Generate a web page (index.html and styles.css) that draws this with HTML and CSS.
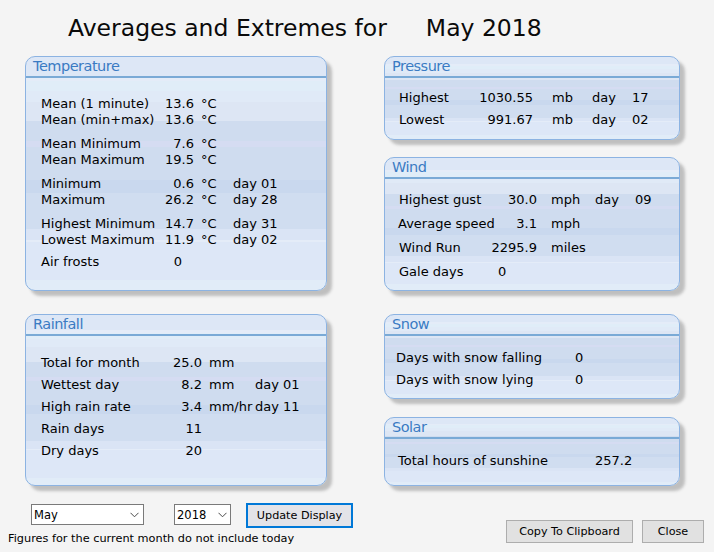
FILE: index.html
```html
<!DOCTYPE html>
<html lang="en">
<head>
<meta charset="utf-8">
<title>Averages and Extremes</title>
<link rel="stylesheet" href="styles.css">
</head>
<body>
<div class="page">
  <h1 class="title"><span class="title-main">Averages and Extremes for</span><span class="title-month">May 2018</span></h1>

  <div class="columns">
    <div class="col">
      <section class="panel panel-temp">
        <div class="panel-head">Temperature</div>
        <div class="panel-body">
          <div class="row"><span>Mean (1 minute)</span><span class="v">13.6</span><span class="u">°C</span></div>
          <div class="row"><span>Mean (min+max)</span><span class="v">13.6</span><span class="u">°C</span></div>
          <div class="row grp"><span>Mean Minimum</span><span class="v">7.6</span><span class="u">°C</span></div>
          <div class="row"><span>Mean Maximum</span><span class="v">19.5</span><span class="u">°C</span></div>
          <div class="row grp"><span>Minimum</span><span class="v">0.6</span><span class="u">°C</span><span>day 01</span></div>
          <div class="row"><span>Maximum</span><span class="v">26.2</span><span class="u">°C</span><span>day 28</span></div>
          <div class="row grp"><span>Highest Minimum</span><span class="v">14.7</span><span class="u">°C</span><span>day 31</span></div>
          <div class="row"><span>Lowest Maximum</span><span class="v">11.9</span><span class="u">°C</span><span>day 02</span></div>
          <div class="row grp-sm"><span>Air frosts</span><span class="v v-inset">0</span></div>
        </div>
      </section>

      <section class="panel panel-rain">
        <div class="panel-head">Rainfall</div>
        <div class="panel-body">
          <div class="row"><span>Total for month</span><span class="v">25.0</span><span class="u">mm</span></div>
          <div class="row"><span>Wettest day</span><span class="v">8.2</span><span class="u">mm</span><span>day 01</span></div>
          <div class="row"><span>High rain rate</span><span class="v">3.4</span><span class="u">mm/hr</span><span>day 11</span></div>
          <div class="row"><span>Rain days</span><span class="v">11</span></div>
          <div class="row"><span>Dry days</span><span class="v">20</span></div>
        </div>
      </section>
    </div>

    <div class="col">
      <section class="panel panel-pressure">
        <div class="panel-head">Pressure</div>
        <div class="panel-body">
          <div class="row"><span>Highest</span><span class="v">1030.55</span><span class="u">mb</span><span>day</span><span>17</span></div>
          <div class="row"><span>Lowest</span><span class="v">991.67</span><span class="u">mb</span><span>day</span><span>02</span></div>
        </div>
      </section>

      <section class="panel panel-wind">
        <div class="panel-head">Wind</div>
        <div class="panel-body">
          <div class="row"><span>Highest gust</span><span class="v">30.0</span><span class="u">mph</span><span>day</span><span>09</span></div>
          <div class="row"><span class="nudge">Average speed</span><span class="v">3.1</span><span class="u">mph</span></div>
          <div class="row"><span>Wind Run</span><span class="v">2295.9</span><span class="u">miles</span></div>
          <div class="row"><span>Gale days</span><span class="v v-left">0</span></div>
        </div>
      </section>

      <section class="panel panel-snow">
        <div class="panel-head">Snow</div>
        <div class="panel-body">
          <div class="row"><span>Days with snow falling</span><span>0</span></div>
          <div class="row"><span>Days with snow lying</span><span>0</span></div>
        </div>
      </section>

      <section class="panel panel-solar">
        <div class="panel-head">Solar</div>
        <div class="panel-body">
          <div class="row"><span>Total hours of sunshine</span><span>257.2</span></div>
        </div>
      </section>
    </div>
  </div>

  <div class="footer">
    <div class="footer-left">
      <div class="controls">
        <div class="select select-month"><span>May</span><svg width="9" height="6" viewBox="0 0 9 6"><polyline points="0.5,0.8 4.5,4.8 8.5,0.8" fill="none" stroke="#4a4a4a" stroke-width="1"/></svg></div>
        <div class="select select-year"><span>2018</span><svg width="9" height="6" viewBox="0 0 9 6"><polyline points="0.5,0.8 4.5,4.8 8.5,0.8" fill="none" stroke="#4a4a4a" stroke-width="1"/></svg></div>
        <button class="btn btn-focus">Update Display</button>
      </div>
      <p class="note">Figures for the current month do not include today</p>
    </div>
    <div class="footer-right">
      <button class="btn btn-copy">Copy To Clipboard</button>
      <button class="btn btn-close">Close</button>
    </div>
  </div>
</div>
</body>
</html>
```

FILE: styles.css
```css
html, body {
  margin: 0;
  padding: 0;
  background: #f4f4f4;
}

body {
  font-family: "DejaVu Sans", Verdana, sans-serif;
  color: #000;
  width: 714px;
  height: 552px;
  overflow: hidden;
}

.title {
  display: flex;
  margin: 0;
  padding-top: 14px;
  height: 28px;
  font-size: 23.5px;
  line-height: 28px;
  font-weight: normal;
  color: #0a0a0a;
}

.title-main { margin-left: 68px; }
.title-month { margin-left: 39px; }

.columns {
  display: grid;
  grid-template-columns: 302px 296px;
  column-gap: 57px;
  padding-left: 25px;
  margin-top: 14px;
}

.col {
  display: flex;
  flex-direction: column;
}

.panel {
  box-sizing: border-box;
  border: 1px solid #8cb3e2;
  border-radius: 10px;
  box-shadow: 5px 5px 3px rgba(80, 80, 80, 0.32);
  background: linear-gradient(to bottom,
    #dde7f6 0%, #dde7f6 8.9%,
    #e4ecf8 8.9%, #e4ecf8 10.5%,
    #e0edf8 10.5%, #e0edf8 14.4%,
    #e0eaf7 14.4%, #e0eaf7 19.1%,
    #dde6f4 19.1%, #dde6f4 27.6%,
    #cfdcef 27.6%, #cfdcef 36.2%,
    #d5dcf2 36.2%, #d5dcf2 38.7%,
    #cfdcef 38.7%, #cfdcef 53%,
    #c9d8ee 53%, #c9d8ee 58.3%,
    #d0ddf0 58.3%, #d0ddf0 74%,
    #dae4f5 74%, #dae4f5 78.6%,
    #e4ecf8 78.6%, #e4ecf8 79.6%,
    #dde7f7 79.6%, #dde7f7 95.6%,
    #e1ecf8 95.6%, #e1ecf8 100%);
  overflow: hidden;
}

.panel-head {
  height: 19px;
  line-height: 19px;
  padding-left: 7px;
  border-bottom: 2px solid #7aaad6;
  font-size: 14.5px;
  letter-spacing: -0.5px;
  color: #3a7bc3;
}

.panel-body {
  font-size: 13px;
}

.row {
  display: grid;
  white-space: nowrap;
}

.v { text-align: right; }
.v-inset { padding-right: 12px; }
.v-left { text-align: left; padding-left: 8px; }
.nudge { margin-left: -1px; }

/* Temperature */
.panel-temp { height: 235px; }
.panel-temp .panel-body { padding: 18px 0 0 15px; }
.panel-temp .row {
  grid-template-columns: 112px 41px 39px auto;
  line-height: 16px;
}
.panel-temp .u { padding-left: 7px; }
.panel-temp .grp { margin-top: 8px; }
.panel-temp .grp-sm { margin-top: 6px; }

/* Rainfall */
.panel-rain { height: 172px; margin-top: 23px; }
.panel-rain .panel-body { padding: 16px 0 0 15px; }
.panel-rain .row {
  grid-template-columns: 119px 42px 53px auto;
  line-height: 22px;
}
.panel-rain .u { padding-left: 7px; }

/* Pressure */
.panel-pressure { height: 84px; }
.panel-pressure .panel-body { padding: 9px 0 0 14px; }
.panel-pressure .row {
  grid-template-columns: 71px 63px 59px 40px auto;
  line-height: 22px;
}
.panel-pressure .u { padding-left: 19px; }

/* Wind */
.panel-wind { height: 134px; margin-top: 17px; }
.panel-wind .panel-body { padding: 9px 0 0 14px; }
.panel-wind .row {
  grid-template-columns: 91px 47px 58px 40px auto;
  line-height: 24px;
}
.panel-wind .u { padding-left: 14px; }

/* Snow */
.panel-snow { height: 85px; margin-top: 23px; }
.panel-snow .panel-body { padding: 11px 0 0 11px; }
.panel-snow .row {
  grid-template-columns: 179px auto;
  line-height: 22px;
}

/* Solar */
.panel-solar { height: 69px; margin-top: 18px; }
.panel-solar .panel-body { padding: 11px 0 0 13px; }
.panel-solar .row {
  grid-template-columns: 197px auto;
  line-height: 22px;
}

/* Footer */
.footer {
  display: flex;
  justify-content: space-between;
  align-items: flex-end;
  margin-top: 17px;
  padding: 0 10px 0 8px;
  font-size: 11.3px;
}

.controls {
  display: flex;
  align-items: flex-start;
  margin-left: 23px;
  height: 25px;
}

.select {
  box-sizing: border-box;
  display: flex;
  align-items: center;
  justify-content: space-between;
  height: 21px;
  margin-top: 1px;
  padding: 0 4px 0 2px;
  border: 1px solid #7a7a7a;
  background: #fff;
  font-size: 11.5px;
}

.select-month { width: 113px; }
.select-year { width: 57px; margin-left: 30px; padding-right: 3px; }

.btn {
  box-sizing: border-box;
  font-family: "DejaVu Sans", Verdana, sans-serif;
  font-size: 11.2px;
  color: #000;
  background: #e1e1e1;
  border: 1px solid #adadad;
  padding: 0;
  margin: 0;
}

.btn-focus {
  width: 107px;
  height: 25px;
  margin-left: 15px;
  border: 2px solid #0078d7;
  background: #e3e3e8;
}

.note {
  margin: 4px 0 0 0;
  line-height: 14px;
}

.footer-right {
  display: flex;
  gap: 9px;
  margin-bottom: 3px;
}

.btn-copy { width: 127px; height: 23px; }
.btn-close { width: 62px; height: 23px; }
```
